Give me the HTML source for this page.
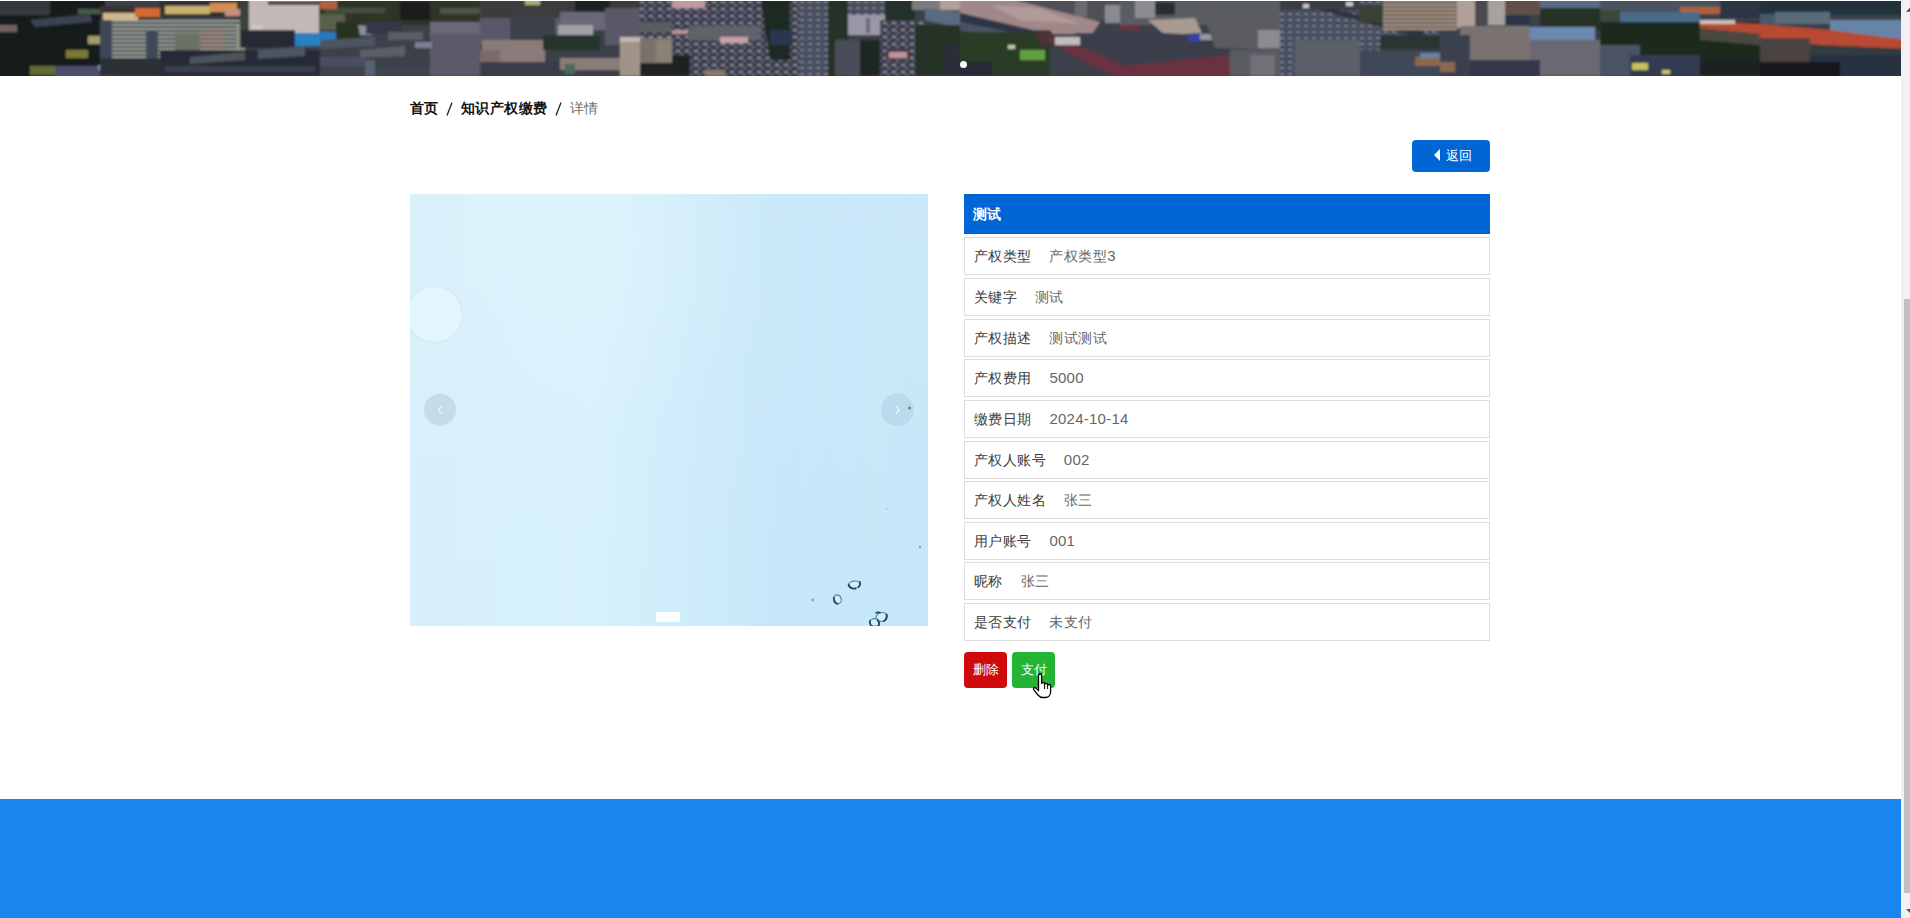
<!DOCTYPE html>
<html><head><meta charset="utf-8">
<style>
*{box-sizing:border-box;margin:0;padding:0}
html,body{width:1910px;height:918px;overflow:hidden;background:#fff;font-family:"Liberation Sans",sans-serif}
#banner{position:absolute;left:0;top:1px;width:1901px;height:75px;background:#3b4046;overflow:hidden}
#dot{position:absolute;left:959.5px;top:60.5px;width:7px;height:7px;border-radius:50%;background:#fff}
#sb{position:absolute;left:1901px;top:0;width:9px;height:918px;background:#f1f1f1}
#thumb{position:absolute;left:2.5px;top:299px;width:6.5px;height:594px;background:#c1c1c1}
#bc{position:absolute;left:410px;top:98px;font-size:14px;line-height:20px;color:#333;white-space:nowrap}
#bc b,#bc span{position:absolute;top:0;color:#111;font-weight:bold}
#bc .sl{position:absolute;top:4px}
#bc .cur{color:#6e6e6e;font-weight:normal}
#back{position:absolute;left:1412px;top:140px;width:78px;height:32px;background:#0066cc;border-radius:4px;color:#fff;font-size:13px;line-height:32px;background:#0066d4}
#tri{position:absolute;left:22px;top:9px;width:0;height:0;border-right:6px solid #fff;border-top:6px solid transparent;border-bottom:6px solid transparent}
#btxt{position:absolute;left:34px;top:-0.5px;white-space:nowrap}
#img{position:absolute;left:410px;top:194px;width:518px;height:432px}
#hdr{position:absolute;left:964px;top:194px;width:526px;height:40px;background:#0066d6;color:#fff;font-size:14px;font-weight:bold;line-height:40px;padding-left:9px}
.row{position:absolute;left:964px;width:526px;height:38px;border:1px solid #ddd;font-size:14px;line-height:36px;padding-left:9px;color:#3c3c3c;white-space:nowrap;letter-spacing:0.45px}
.row span{color:#666;margin-left:17.6px;letter-spacing:0.45px}
.row em{font-style:normal;font-size:15px;letter-spacing:0.25px}
.btn{position:absolute;top:652px;height:36px;width:43px;border-radius:4px;color:#fff;font-size:13px;line-height:36px;text-align:center}
#footer{position:absolute;left:0;top:799px;width:1901px;height:119px;background:#1a84ef}
</style></head><body>
<div id="banner"><svg width="1901" height="75" viewBox="0 1 1901 75" style="display:block">
<defs>
<filter id="bl" x="-1%" y="-20%" width="102%" height="140%"><feGaussianBlur stdDeviation="1.3"/></filter>
<pattern id="stripeL" width="6" height="4" patternUnits="userSpaceOnUse"><rect width="6" height="4" fill="#a49488"/><rect y="2.4" width="6" height="1.6" fill="#5a4a44"/></pattern>
<pattern id="stripeG" width="5" height="4" patternUnits="userSpaceOnUse"><rect width="5" height="4" fill="#9aa094"/><rect y="2.2" width="5" height="1.8" fill="#2e3648"/></pattern>
<pattern id="speck" width="9" height="7" patternUnits="userSpaceOnUse"><rect width="9" height="7" fill="#3a3e4e"/><rect x="1" y="1" width="4" height="2" fill="#8a8c98"/><rect x="5" y="4" width="3" height="2" fill="#6a6e7c"/></pattern>
<pattern id="speck2" width="8" height="6" patternUnits="userSpaceOnUse"><rect width="8" height="6" fill="#42485a"/><rect x="0" y="1" width="4" height="2" fill="#7a8090"/><rect x="4" y="3.5" width="3" height="1.5" fill="#5a6070"/></pattern>
</defs>
<g filter="url(#bl)">
<rect x="-5" y="-5" width="1911" height="90" fill="#3a3f48"/>
<!-- 0-160 -->
<rect x="-5" y="-5" width="110" height="90" fill="#161a1a"/>
<rect x="-5" y="-5" width="55" height="20" fill="#363a3c"/>
<rect x="-5" y="25" width="22" height="7" fill="#6e6260"/>
<polygon points="30,20 90,14 92,22 35,27" fill="#3a4252"/>
<rect x="78" y="9" width="22" height="5" fill="#4a5a48"/>
<rect x="88" y="36" width="12" height="8" fill="#a09a6a"/>
<rect x="66" y="50" width="22" height="8" fill="#7a7a34"/>
<rect x="30" y="66" width="28" height="9" fill="#626a34"/>
<rect x="55" y="66" width="60" height="12" fill="#48506a"/>
<rect x="98" y="65" width="17" height="5" fill="#7a90b0"/>
<rect x="100" y="6" width="60" height="14" fill="#3a3030"/>
<rect x="103" y="13" width="35" height="7" fill="#d0b890"/>
<rect x="135" y="8" width="25" height="9" fill="#d06a30"/>
<rect x="100" y="20" width="145" height="38" fill="url(#stripeG)"/>
<rect x="100" y="20" width="12" height="40" fill="#3e4658"/>
<rect x="146" y="30" width="12" height="28" fill="#40485a"/>
<rect x="100" y="58" width="60" height="18" fill="#2a3038"/>
<!-- 160-320 -->
<rect x="160" y="1" width="80" height="16" fill="#2e3030"/>
<rect x="165" y="6" width="45" height="8" fill="#c8b070"/>
<rect x="210" y="3" width="27" height="9" fill="#d09050"/>
<rect x="225" y="9" width="15" height="7" fill="#c89080"/>
<rect x="175" y="33" width="25" height="19" fill="#6a7268"/>
<rect x="200" y="28" width="25" height="22" fill="url(#stripeL)" opacity="0.8"/>
<rect x="236" y="26" width="14" height="22" fill="#8a9080"/>
<rect x="240" y="-5" width="9" height="35" fill="#3a4238"/>
<rect x="249" y="-5" width="70" height="40" fill="#c2b8b6"/>
<rect x="268" y="1" width="52" height="4" fill="#4a4242"/>
<rect x="240" y="30" width="55" height="18" fill="#252b34"/>
<rect x="252" y="25" width="10" height="4" fill="#c8ccc8"/>
<rect x="295" y="33" width="30" height="13" fill="#2a80c0"/>
<rect x="160" y="50" width="160" height="26" fill="#262c38"/>
<polygon points="190,57 245,52 245,60 190,64" fill="#4e545c"/>
<polygon points="258,50 305,46 305,56 258,59" fill="#4e545e"/>
<rect x="165" y="66" width="150" height="6" fill="#3a4050"/>
<!-- 320-480 -->
<rect x="320" y="-5" width="160" height="30" fill="#2e3428"/>
<rect x="400" y="2" width="30" height="18" fill="#1a1e1a"/>
<rect x="325" y="8" width="60" height="5" fill="#4a5040"/>
<rect x="440" y="8" width="40" height="6" fill="#505446"/>
<rect x="320" y="-5" width="17" height="14" fill="#b06040"/>
<rect x="320" y="14" width="25" height="16" fill="#5a6048"/>
<rect x="336" y="22" width="24" height="20" fill="#283024"/>
<rect x="320" y="32" width="16" height="12" fill="#2a78c0"/>
<polygon points="358,25 368,26 372,35 360,35" fill="#8a8e98"/>
<rect x="366" y="22" width="36" height="12" fill="#30384a"/>
<polygon points="320,40 375,37 375,46 320,49" fill="#4e5460"/>
<rect x="388" y="32" width="35" height="8" fill="#5a5e66"/>
<polygon points="360,50 405,46 405,56 360,58" fill="#5a5e68"/>
<rect x="320" y="57" width="45" height="12" fill="#4a5060"/>
<rect x="430" y="22" width="50" height="54" fill="#5c5a6a"/>
<rect x="430" y="22" width="50" height="12" fill="#6a6876"/>
<rect x="415" y="42" width="17" height="6" fill="#7a8090"/>
<rect x="320" y="66" width="110" height="10" fill="#3e4450"/>
<rect x="365" y="60" width="10" height="16" fill="#566070"/>
<!-- 480-640 -->
<rect x="480" y="-5" width="160" height="23" fill="#3a3e3c"/>
<rect x="525" y="-5" width="15" height="10" fill="#a8b070"/>
<rect x="575" y="-5" width="35" height="23" fill="#1e2220"/>
<rect x="480" y="18" width="80" height="27" fill="#5a5868"/>
<rect x="510" y="15" width="45" height="25" fill="#3a404a"/>
<rect x="482" y="40" width="63" height="22" fill="#8a7a78"/>
<rect x="480" y="50" width="20" height="15" fill="#7a6a68"/>
<rect x="560" y="12" width="65" height="18" fill="#6a6878"/>
<rect x="558" y="25" width="35" height="15" fill="#9ea2a8"/>
<rect x="543" y="35" width="57" height="15" fill="#28342a"/>
<rect x="605" y="8" width="35" height="37" fill="#5a5866"/>
<rect x="620" y="38" width="20" height="38" fill="#a09488"/>
<rect x="620" y="37" width="20" height="5" fill="#c0b8b0"/>
<rect x="560" y="58" width="60" height="12" fill="#8a7a78"/>
<rect x="480" y="62" width="80" height="14" fill="#383e48"/>
<rect x="565" y="64" width="10" height="10" fill="#4a6a58"/>
<!-- 640-800 -->
<rect x="640" y="-5" width="160" height="90" fill="url(#speck)"/>
<rect x="672" y="-5" width="33" height="13" fill="#c09aa0"/>
<rect x="640" y="22" width="30" height="10" fill="#5a5c64"/>
<rect x="672" y="30" width="16" height="4" fill="#b89098"/>
<rect x="640" y="38" width="32" height="27" fill="#7a7268"/>
<rect x="656" y="40" width="16" height="22" fill="#8a8274"/>
<rect x="640" y="63" width="50" height="13" fill="#202428"/>
<rect x="672" y="55" width="18" height="21" fill="#1e2024"/>
<rect x="690" y="26" width="70" height="14" fill="#60626a"/>
<rect x="720" y="37" width="28" height="6" fill="#c8a0a8"/>
<rect x="705" y="70" width="20" height="6" fill="#8a7a68"/>
<polygon points="760,-5 790,-5 790,60 770,60" fill="#1e2a22"/>
<rect x="770" y="30" width="22" height="15" fill="#2a3450"/>
<!-- 800-960 -->
<rect x="800" y="-5" width="35" height="90" fill="url(#speck2)"/>
<rect x="828" y="-5" width="20" height="90" fill="#263028"/>
<rect x="848" y="-5" width="37" height="20" fill="url(#speck2)"/>
<rect x="848" y="15" width="37" height="20" fill="#9a98a8"/>
<rect x="866" y="18" width="4" height="15" fill="#6a6878"/>
<rect x="835" y="40" width="25" height="36" fill="#4a4e5a"/>
<rect x="860" y="40" width="20" height="36" fill="#1e2820"/>
<rect x="880" y="20" width="45" height="56" fill="url(#speck)"/>
<rect x="886" y="50" width="24" height="10" fill="#5a3040"/>
<rect x="889" y="52" width="18" height="6" fill="#b898a0"/>
<rect x="885" y="-5" width="30" height="25" fill="#22302a"/>
<rect x="912" y="-5" width="48" height="15" fill="#7a7a80"/>
<rect x="940" y="-5" width="20" height="15" fill="#b0a098"/>
<polygon points="925,8 960,12 960,28 925,20" fill="#5a6a80"/>
<rect x="915" y="25" width="45" height="51" fill="#253225"/>
<rect x="945" y="45" width="15" height="31" fill="#2a2e38"/>
<!-- 960-1120 -->
<rect x="995" y="-5" width="125" height="25" fill="#505058"/>
<rect x="1075" y="-5" width="12" height="22" fill="#6a6a70"/>
<rect x="1105" y="5" width="15" height="18" fill="#8a8a90"/>
<polygon points="960,-5 995,-5 1100,22 1092,34 1050,34 960,13" fill="#a08888"/>
<polygon points="990,5 1040,8 1080,24 1020,20" fill="#b09a9a"/>
<polygon points="960,13 1050,34 1040,40 960,26" fill="#2e3446"/>
<polygon points="960,22 1010,32 1010,40 960,30" fill="#4a5262"/>
<rect x="960" y="32" width="90" height="44" fill="#2a3a28"/>
<rect x="1020" y="50" width="25" height="10" fill="#60a040"/>
<rect x="1008" y="45" width="7" height="4" fill="#c0c8a0"/>
<rect x="960" y="62" width="32" height="14" fill="#252a34"/>
<polygon points="1035,30 1050,30 1060,45 1040,45" fill="#4a3038"/>
<polygon points="1075,33 1120,33 1120,62 1090,50" fill="#3a3e4c"/>
<polygon points="1045,38 1060,38 1120,64 1120,78 1080,60" fill="#6a3040"/>
<rect x="1055" y="37" width="25" height="8" fill="#c0bcbc"/>
<!-- 1120-1280 -->
<rect x="1120" y="-5" width="160" height="30" fill="#5a5c64"/>
<rect x="1135" y="-5" width="20" height="23" fill="#8a8c90"/>
<rect x="1155" y="2" width="20" height="13" fill="#2a2e30"/>
<polygon points="1148,20 1195,18 1202,33 1165,35" fill="#a89a90"/>
<rect x="1120" y="25" width="20" height="7" fill="#6a3040"/>
<polygon points="1120,30 1210,36 1225,56 1120,68" fill="#3a3e4c"/>
<rect x="1188" y="35" width="12" height="6" fill="#3040b0"/>
<rect x="1200" y="34" width="18" height="6" fill="#9098a0"/>
<polygon points="1120,66 1230,55 1230,80 1120,80" fill="#6a3040"/>
<polygon points="1200,5 1280,15 1280,50 1215,48" fill="#5a5c62"/>
<rect x="1258" y="30" width="22" height="18" fill="#8a8c90"/>
<rect x="1230" y="50" width="50" height="26" fill="#5a5c62"/>
<rect x="1250" y="55" width="25" height="21" fill="#707078"/>
<!-- 1280-1440 -->
<rect x="1280" y="-5" width="160" height="90" fill="url(#speck2)"/>
<rect x="1280" y="-5" width="80" height="15" fill="#3a3e44"/>
<rect x="1303" y="4" width="6" height="4" fill="#c8ccc8"/>
<rect x="1346" y="2" width="7" height="4" fill="#c8ccc8"/>
<polygon points="1320,10 1330,8 1425,32 1420,38" fill="#2e343e"/>
<rect x="1360" y="5" width="25" height="17" fill="#3a4030"/>
<rect x="1383" y="-5" width="57" height="35" fill="url(#stripeL)"/>
<rect x="1380" y="35" width="60" height="15" fill="#2a3430"/>
<rect x="1295" y="40" width="65" height="36" fill="#5a5e6a"/>
<rect x="1360" y="50" width="80" height="26" fill="#404656"/>
<rect x="1415" y="57" width="25" height="9" fill="#8a6848"/>
<rect x="1420" y="53" width="20" height="5" fill="#6a80a0"/>
<!-- 1440-1600 -->
<rect x="1440" y="-5" width="17" height="35" fill="url(#stripeL)"/>
<rect x="1457" y="-5" width="18" height="33" fill="#b0a098"/>
<rect x="1475" y="-5" width="13" height="30" fill="#4a4a50"/>
<rect x="1488" y="-5" width="17" height="30" fill="#a8a29c"/>
<rect x="1505" y="-5" width="35" height="20" fill="#62504a"/>
<rect x="1540" y="-5" width="60" height="13" fill="#5a6a84"/>
<rect x="1540" y="8" width="60" height="22" fill="#253025"/>
<rect x="1505" y="15" width="25" height="10" fill="#2a3448"/>
<rect x="1530" y="27" width="65" height="13" fill="#6a88b0"/>
<rect x="1460" y="26" width="70" height="36" fill="#7a7270"/>
<rect x="1530" y="40" width="70" height="36" fill="#6a6870"/>
<rect x="1440" y="35" width="30" height="41" fill="#3a4050"/>
<rect x="1470" y="60" width="70" height="16" fill="#303848"/>
<rect x="1440" y="62" width="15" height="10" fill="#8a6850"/>
<!-- 1600-1760 -->
<rect x="1600" y="-5" width="120" height="17" fill="#4a5260"/>
<rect x="1680" y="7" width="40" height="7" fill="#b06038"/>
<rect x="1720" y="-5" width="40" height="23" fill="#2e3642"/>
<rect x="1620" y="12" width="80" height="10" fill="#4a6a88"/>
<rect x="1600" y="10" width="20" height="10" fill="#3a4838"/>
<rect x="1600" y="22" width="160" height="54" fill="#1e2a1e"/>
<polygon points="1700,28 1760,34 1760,45 1700,40" fill="#4a4840"/>
<polygon points="1700,21 1760,24 1760,34 1700,28" fill="#b84a30"/>
<rect x="1700" y="20" width="35" height="4" fill="#c8c0c0"/>
<rect x="1600" y="45" width="40" height="31" fill="#4a5264"/>
<rect x="1630" y="55" width="70" height="21" fill="#303a50"/>
<rect x="1632" y="63" width="16" height="7" fill="#c8c060"/>
<rect x="1662" y="70" width="8" height="4" fill="#c8c870"/>
<rect x="1700" y="60" width="60" height="16" fill="#1e2220"/>
<!-- 1750-1901 -->
<rect x="1760" y="-5" width="146" height="20" fill="#22303c"/>
<rect x="1760" y="14" width="60" height="10" fill="#4a5a68"/>
<rect x="1775" y="12" width="55" height="12" fill="#5a6a78"/>
<rect x="1830" y="20" width="76" height="22" fill="#6684a8"/>
<polygon points="1760,24 1830,30 1906,40 1906,49 1820,45 1760,38" fill="#b84830"/>
<polygon points="1760,38 1820,45 1906,49 1906,60 1760,60" fill="#303a40"/>
<rect x="1760" y="38" width="50" height="38" fill="#4a4240"/>
<rect x="1810" y="55" width="96" height="21" fill="#283040"/>
<rect x="1760" y="62" width="80" height="16" fill="#15181a"/>
</g>
</svg></div>
<div id="dot"></div>
<div id="bc"><b style="left:0">首页</b><svg class="sl" style="left:36px" width="7" height="14" viewBox="0 0 7 14"><path d="M6 0.6 L1 13.4" stroke="#222" stroke-width="1.3"/></svg><b style="left:50.5px;letter-spacing:0.5px">知识产权缴费</b><svg class="sl" style="left:145px" width="7" height="14" viewBox="0 0 7 14"><path d="M6 0.6 L1 13.4" stroke="#222" stroke-width="1.3"/></svg><span class="cur" style="left:159.5px">详情</span></div>
<div id="back"><i id="tri"></i><span id="btxt">返回</span></div>
<div id="img"><svg width="518" height="432" viewBox="410 194 518 432" style="display:block">
<defs>
<linearGradient id="ig" x1="0" x2="1" y1="0" y2="0">
<stop offset="0" stop-color="#d6effa"/><stop offset="0.35" stop-color="#d7f1fc"/><stop offset="0.7" stop-color="#cdebfa"/><stop offset="1" stop-color="#c8e8f8"/>
</linearGradient>
<linearGradient id="ig2" x1="0" x2="0" y1="0" y2="1">
<stop offset="0" stop-color="#fff" stop-opacity="0.08"/><stop offset="1" stop-color="#fff" stop-opacity="0"/>
</linearGradient>
</defs>
<rect x="410" y="194" width="518" height="432" fill="url(#ig)"/>
<rect x="410" y="194" width="518" height="432" fill="url(#ig2)"/>
<radialGradient id="rg" cx="600" cy="240" r="200" gradientUnits="userSpaceOnUse"><stop offset="0" stop-color="#e2f6fd" stop-opacity="0.55"/><stop offset="1" stop-color="#e2f6fd" stop-opacity="0"/></radialGradient>
<linearGradient id="rg2" x1="600" y1="0" x2="928" y2="0" gradientUnits="userSpaceOnUse"><stop offset="0" stop-color="#b8def5" stop-opacity="0"/><stop offset="0.55" stop-color="#b8def5" stop-opacity="0.28"/><stop offset="1" stop-color="#b8def5" stop-opacity="0.12"/></linearGradient>
<rect x="410" y="194" width="518" height="432" fill="url(#rg)"/>
<rect x="600" y="194" width="328" height="432" fill="url(#rg2)"/>
<circle cx="434.5" cy="314.5" r="28" fill="#e3f5fd" stroke="#d6e9f1" stroke-width="1.2"/>
<circle cx="440" cy="409.8" r="16" fill="#c2dce8"/>
<path d="M441.5 406.5 L438.2 410 L441.5 413.5" fill="none" stroke="#eaf6fb" stroke-width="1.2"/>
<circle cx="897.3" cy="409.9" r="16.3" fill="#b9dbec"/>
<path d="M896 406.5 L899.3 410 L896 413.5" fill="none" stroke="#eaf6fb" stroke-width="1.2"/>
<circle cx="909.5" cy="408" r="1.6" fill="#4a7890" opacity="0.8"/>
<rect x="656" y="612" width="24" height="10" fill="#fbfeff"/>
<g fill="#d3eef9" stroke="#4f8aa5" stroke-width="1.2">
<ellipse cx="854.2" cy="584.8" rx="5.8" ry="3.7" transform="rotate(-10 854.2 584.8)"/>
<ellipse cx="837.4" cy="599.3" rx="3.8" ry="4.5" transform="rotate(-20 837.4 599.3)"/>
<ellipse cx="881.7" cy="617" rx="5.8" ry="4.4" transform="rotate(-15 881.7 617)"/>
<ellipse cx="874.6" cy="622.4" rx="4.8" ry="3.8"/>
</g>
<g fill="none" stroke="#1f4a60" stroke-width="1.8" stroke-linecap="round">
<path d="M848.6 584.5 Q850 589 855.5 588.5"/>
<path d="M859.8 582 Q860.5 585.5 858.5 587"/>
<path d="M834 598 Q833.5 602.5 837.5 603.8"/>
<path d="M886.5 614.5 Q887.5 618.5 884 621"/>
<path d="M876.2 612.8 Q877.5 612 880 612.6"/>
<path d="M870 621 Q869.5 625 872 626"/>
<path d="M877.5 620 Q880 623 878.5 626"/>
</g>
<circle cx="812.6" cy="600" r="1.4" fill="#7aa8bc"/>
<circle cx="920" cy="547" r="1.2" fill="#7aa8bc"/>
<circle cx="887" cy="509" r="0.8" fill="#9ac0d0"/>
</svg></div>
<div id="hdr">测试</div>
<div class="row" style="top:237.20px">产权类型<span>产权类型<em>3</em></span></div>
<div class="row" style="top:277.86px">关键字<span>测试</span></div>
<div class="row" style="top:318.52px">产权描述<span>测试测试</span></div>
<div class="row" style="top:359.18px">产权费用<span><em>5000</em></span></div>
<div class="row" style="top:399.84px">缴费日期<span><em>2024-10-14</em></span></div>
<div class="row" style="top:440.50px">产权人账号<span><em>002</em></span></div>
<div class="row" style="top:481.16px">产权人姓名<span>张三</span></div>
<div class="row" style="top:521.82px">用户账号<span><em>001</em></span></div>
<div class="row" style="top:562.48px">昵称<span>张三</span></div>
<div class="row" style="top:603.14px">是否支付<span>未支付</span></div>
<div class="btn" style="left:964px;background:#d00a0a">删除</div>
<div class="btn" style="left:1012px;background:#23b435">支付</div>
<div id="footer"></div>
<svg id="cur" width="24" height="28" viewBox="0 0 24 28" style="position:absolute;left:1031px;top:672px">
<path d="M7.5 3.2 C7.5 1.6 10.6 1.6 10.6 3.2 L10.6 11.5 C10.6 10 13.6 10 13.6 11.5 L13.6 12.5 C13.6 11 16.6 11 16.6 12.5 L16.6 13.5 C16.6 12 19.6 12 19.6 13.5 L19.6 19.5 C19.6 23 17.5 25.5 14.5 25.5 L11.5 25.5 C9.5 25.5 8.3 24.5 7 23 L2.8 17.8 C1.8 16.5 3.2 15 4.5 15.8 L7.5 18.5 Z" fill="#fff" stroke="#000" stroke-width="1.3" stroke-linejoin="round"/>
<path d="M13.6 12.5 L13.6 17 M16.6 13.5 L16.6 17" stroke="#000" stroke-width="1"/>
</svg>
<div id="sb"><div id="thumb"></div><svg width="9" height="918" style="position:absolute;left:0;top:0"><path d="M5 11.8 L9 7.8 L13 11.8 Z" fill="#505050"/><path d="M5 909 L9 913 L13 909 Z" fill="#505050"/></svg></div>
</body></html>
